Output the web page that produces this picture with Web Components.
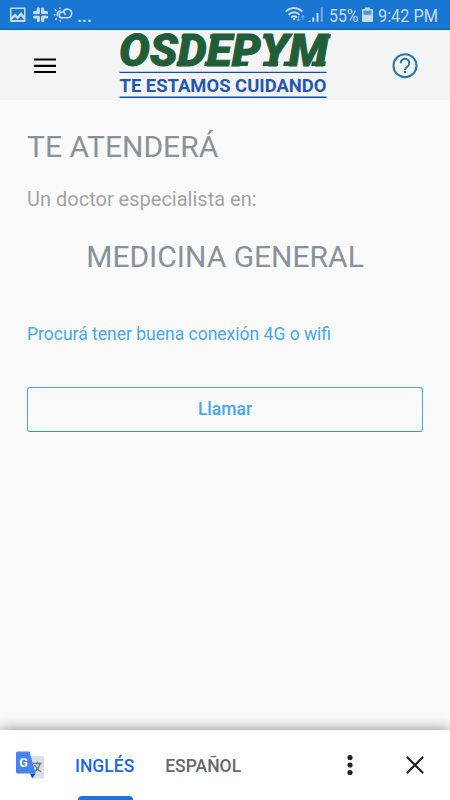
<!DOCTYPE html>
<html lang="es">
<head>
<meta charset="utf-8">
<meta name="viewport" content="width=device-width, initial-scale=1">
<title>Osdepym</title>
<style>
  html, body { height: 100%; }
  body {
    margin: 0;
    background: #fafafa;
    font-family: Roboto, "Liberation Sans", sans-serif;
    overflow: hidden;
  }
</style>
</head>
<body>
<call-screen></call-screen>

<script>
const html = String.raw;

class StatusBar extends HTMLElement {
  constructor() {
    super();
    this.attachShadow({ mode: "open" }).innerHTML = html`
      <style>
        :host {
          display: block;
          height: 30px;
          flex: none;
          background: #1976d2;
          box-shadow: inset 0 -1px #0b62bd;
        }
        svg { display: block; }
        text { fill: #c4dcf6; }
      </style>
      <svg width="450" height="30" viewBox="0 0 450 30" fill="#c4dcf6">
        <!-- picture -->
        <path fill-rule="evenodd" d="M11 7.500h13.500q1 0 1 1V21q0 1-1 1H11q-1 0-1-1V8.500q0-1 1-1zM11.500 9v8l3.500-3.500 2.500 2.500 3.500-4 3 3.500V9zM11.500 20h12.500l-3-4-3.500 3.500-2.500-2.500z"/>
        <!-- slack -->
        <g stroke="#c4dcf6" stroke-width="3.200" stroke-linecap="round">
          <path d="M38.300 8.800v4.100M34.600 12.700h3.700M42.700 9v3.700M42.700 12.700h3.800M34.600 17h3.700M38.300 17v3.600M42.700 17h3.900M42.700 17v3.600"/>
        </g>
        <path d="M40.500 8v14M33 14.850h15.500" stroke="#1976d2" stroke-width=".9"/>
        <!-- weather -->
        <g fill="none" stroke="#c4dcf6" stroke-width="1.600" stroke-linecap="round">
          <path d="M65 14.500a2.900 2.900 0 1 0-2.500 3.300h5a4.300 4.300 0 1 0-4.300-5.500"/>
          <path d="M60.200 11a3.300 3.300 0 0 0-2.700 4.700"/>
          <path d="M60 8.300V8M56 10.500l-.7-.7M54.800 14.700h-.4M56.300 18.700l-.5.5M60.300 20.500v.4"/>
        </g>
        <text x="77" y="21.800" font-size="19" font-weight="500" textLength="15">...</text>
        <!-- wifi -->
        <g fill="none" stroke="#c4dcf6" stroke-width="1.900">
          <path d="M285.800 11.600q8.200-7 16.600 0"/>
          <path d="M288.500 14.700q5.600-4.800 11.200 0"/>
          <path d="M291.200 17.500q2.900-2.400 5.800 0"/>
        </g>
        <circle cx="294.100" cy="19" r="1.300"/>
        <path d="M298.500 16v5m-1.800-1.800 1.800 2 1.800-2M303 20v-4.500m-1.800 2 1.800-2 1.800 2" fill="none" stroke="#7fb2e6" stroke-width="1"/>
        <!-- signal -->
        <path d="M308 21.700l2.500-1.800v1.800zM312.300 17.500h2v4.200h-2zM316.500 13h2v8.700h-2z"/>
        <path d="M320.800 7.500h2v14.200h-2z" fill="#75ade5"/>
        <text x="329" y="21.800" font-size="19.200" textLength="29.500" lengthAdjust="spacingAndGlyphs">55%</text>
        <!-- battery -->
        <path d="M365 7.500h5V9h2q1 0 1 1v11q0 1-1 1h-9q-1 0-1-1V10q0-1 1-1h2z"/>
        <path d="M363.500 10.600h8v4.200h-8z" fill="#5196dc"/>
        <text x="378" y="21.800" font-size="19.200" textLength="60" lengthAdjust="spacingAndGlyphs">9:42 PM</text>
      </svg>
    `;
  }
}

class BrandLogo extends HTMLElement {
  constructor() {
    super();
    this.attachShadow({ mode: "open" }).innerHTML = html`
      <style>
        :host { display: block; width: 214px; height: 70px; }
        svg { display: block; overflow: visible; }
        .name {
          font: italic 900 43.500px/1 Roboto, sans-serif;
          fill: #215d38;
          stroke: #215d38;
          stroke-width: .8px;
        }
        .claim { font: bold 18px Roboto, sans-serif; fill: #2458ae; }
      </style>
      <svg width="214" height="70" viewBox="0 0 214 70">
        <text class="name" x="2" y="35.500" textLength="209" lengthAdjust="spacingAndGlyphs">OSDEPYM</text>
        <!-- slab feet and caps of the wordmark -->
        <path fill="#215d38" d="M60 31.500h8l-.8 4.400h-8zM65 4.200h6l-.8 4.400h-6zM88 31.500h8l-.8 4.400h-8zM93.500 4.200h6l-.8 4.400h-6zM115.500 31.500h16l-.8 4.400h-16zM121 4.200h6l-.8 4.400h-6zM146.500 31.500h15l-.8 4.400h-15zM146.500 4.200h10l-.8 4.400h-10zM167 31.500h12l-.8 4.400h-12zM195 31.500h14l-.8 4.400h-14zM205 4.200h9l-.8 4.400h-9z"/>
        <path d="M2.500 42.400h207M2.500 67.300h207" stroke="#0d4fae" stroke-width="1.400"/>
        <text class="claim" x="2.500" y="61.500" textLength="207" lengthAdjust="spacingAndGlyphs">TE ESTAMOS CUIDANDO</text>
      </svg>
    `;
  }
}

class AppHeader extends HTMLElement {
  constructor() {
    super();
    this.attachShadow({ mode: "open" }).innerHTML = html`
      <style>
        :host {
          display: flex;
          align-items: center;
          justify-content: space-between;
          box-sizing: border-box;
          height: 70px;
          flex: none;
          padding: 0 31px 0 33px;
          background: #f4f4f4;
        }
        svg { display: block; }
      </style>
      <svg width="24" height="24" viewBox="0 0 24 24">
        <path d="M1 6.500h22M1 12.800h22M1 19h22" stroke="#000" stroke-width="2.200"/>
      </svg>
      <brand-logo></brand-logo>
      <svg width="28" height="28" viewBox="0 0 28 28" fill="none" stroke="#2576ae">
        <circle cx="14" cy="14.700" r="11.500" stroke-width="2"/>
        <path d="M9.700 12.300a4.300 4.300 0 1 1 6.900 3.200c-1.800 1.300-2.600 1.900-2.600 3.400" stroke-width="2"/>
        <path d="M14 19.900v2.200" stroke-width="2.200"/>
      </svg>
    `;
  }
}

class OutlineButton extends HTMLElement {
  constructor() {
    super();
    this.attachShadow({ mode: "open" }).innerHTML = html`
      <style>
        :host { display: block; }
        button {
          display: block;
          width: 100%;
          height: 45px;
          padding: 0;
          border: 1px solid #45a7ef;
          border-bottom-color: #149be9;
          border-radius: 3px;
          background: transparent;
          color: #45a7ef;
          font: 500 17.500px/41px Roboto, sans-serif;
        }
      </style>
      <button type="button"><slot></slot></button>
    `;
  }
}

class TranslateBar extends HTMLElement {
  constructor() {
    super();
    this.attachShadow({ mode: "open" }).innerHTML = html`
      <style>
        :host {
          display: flex;
          align-items: center;
          box-sizing: border-box;
          height: 70px;
          flex: none;
          padding: 0 26px 0 16px;
          background: #fff;
          box-shadow: 0 0 13px rgba(0, 0, 0, .48);
        }
        svg { display: block; flex: none; }
        nav { display: flex; gap: 31px; margin: 0 auto 0 31px; }
        .tab {
          display: flex;
          flex-direction: column;
          align-items: center;
          height: 70px;
          color: #65696d;
          font-size: 17.500px;
          font-weight: 500;
          line-height: 73px;
        }
        .tab span { height: 66px; }
        .tab.active { color: #1967e8; }
        .tab.active::after {
          content: "";
          width: 55px;
          height: 4px;
          margin-left: 1px;
          border-radius: 4px 4px 0 0;
          background: #1a73e8;
        }
        .dots { margin-right: 52px; }
      </style>
      <svg width="28" height="28" viewBox="0 0 28 28">
        <path d="M13 5h13.500q1.500 0 1.500 1.500v19.500q0 1.500-1.500 1.500H17.500z" fill="#dcdfe1"/>
        <path d="M14 22.500h5.700l-3.500 5z" fill="#2440b8"/>
        <path d="M17 12.500h8.500M21.500 10.500v2M24 12.500q-1 5-6 8.500M18.500 14q2 4 6.500 7" fill="none" stroke="#607d8b" stroke-width="1.400"/>
        <path d="M1.500.5h12l6.200 22H1.500Q0 22.500 0 21V2Q0 .500 1.500.500z" fill="#4683ee"/>
        <text x="3.200" y="16" font-size="12.500" font-weight="bold" fill="#fff">G</text>
      </svg>
      <nav>
        <div class="tab active"><span>INGLÉS</span></div>
        <div class="tab"><span>ESPAÑOL</span></div>
      </nav>
      <svg class="dots" width="8" height="24" viewBox="0 0 8 24" fill="#202124">
        <circle cx="4" cy="4.500" r="2.600"/>
        <circle cx="4" cy="12" r="2.600"/>
        <circle cx="4" cy="19.500" r="2.600"/>
      </svg>
      <svg width="18" height="18" viewBox="0 0 18 18">
        <path d="M1.500 1.500l15 15M16.500 1.500l-15 15" stroke="#202124" stroke-width="2.200" stroke-linecap="round"/>
      </svg>
    `;
  }
}

class CallScreen extends HTMLElement {
  constructor() {
    super();
    this.attachShadow({ mode: "open" }).innerHTML = html`
      <style>
        :host {
          display: flex;
          flex-direction: column;
          width: 450px;
          height: 800px;
          background: #fafafa;
        }
        main { flex: 1; padding: 28px 27px 0; }
        h1, h2, p { margin: 0; font-weight: 400; }
        h1, h2 { color: #87929a; font-size: 30px; line-height: 38px; }
        h2 { margin-top: 27px; text-align: center; }
        .lead { margin-top: 21px; color: #a3a3a3; font-size: 20px; line-height: 24px; }
        .tip { margin-top: 47px; color: #45a7ef; font-size: 17.500px; line-height: 22px; }
        outline-button { margin-top: 42px; }
      </style>
      <status-bar></status-bar>
      <app-header></app-header>
      <main>
        <h1>TE ATENDERÁ</h1>
        <p class="lead">Un doctor especialista en:</p>
        <h2>MEDICINA GENERAL</h2>
        <p class="tip">Procurá tener buena conexión 4G o wifi</p>
        <outline-button>Llamar</outline-button>
      </main>
      <translate-bar></translate-bar>
    `;
  }
}

customElements.define("status-bar", StatusBar);
customElements.define("brand-logo", BrandLogo);
customElements.define("app-header", AppHeader);
customElements.define("outline-button", OutlineButton);
customElements.define("translate-bar", TranslateBar);
customElements.define("call-screen", CallScreen);
</script>
</body>
</html>
